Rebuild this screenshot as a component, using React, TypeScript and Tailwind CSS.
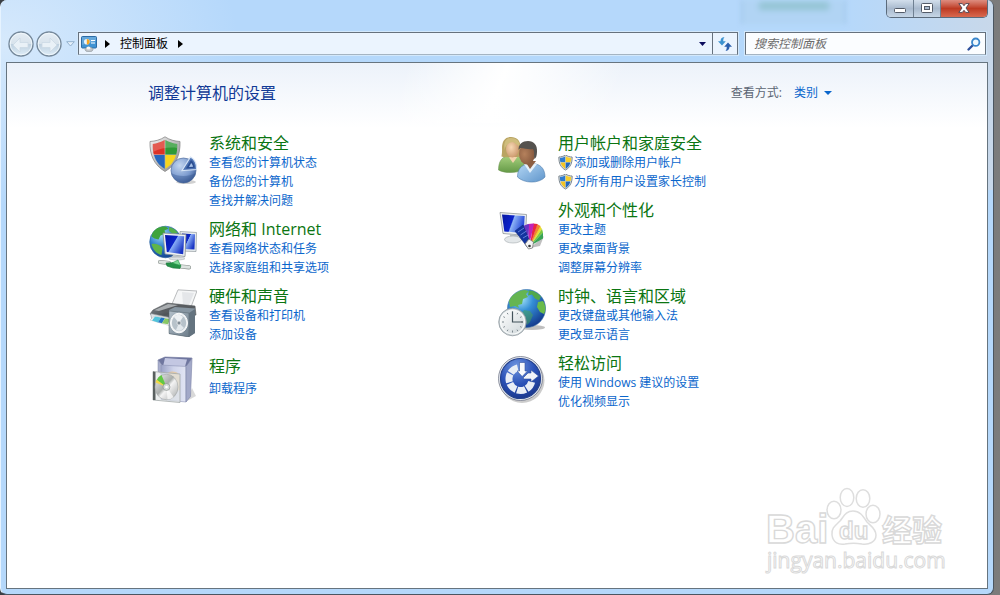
import React from 'react';

const FONT = "font-['Open_Sans','Noto_Sans_CJK_SC',sans-serif]";

interface IconProps {
  className?: string;
}

interface TaskLink {
  label: string;
  shield?: boolean;
}

interface Category {
  title: string;
  icon: React.FC<IconProps>;
  links: TaskLink[];
}

/* ---------- small icons ---------- */

const UacShieldIcon: React.FC<IconProps> = ({ className }) => (
  <svg viewBox="0 0 16 16" className={className} aria-hidden="true">
    <path d="M7.500 0C5.500 1.400 3 2 .9 2 .7 7.900 2.500 12.400 7.500 15 12.500 12.400 14.300 7.900 14.100 2 12 2 9.500 1.400 7.500 0Z" fill="#dfe4e8" stroke="#7d8890" strokeWidth="1" />
    <path d="M7.300 1.300C5.700 2.400 4.100 2.900 1.900 3.100c0 1.400.1 2.900.5 4.100h4.900Z" fill="#2d7bd0" />
    <path d="M7.700 1.300c1.600 1.100 3.200 1.600 5.400 1.800 0 1.400-.1 2.900-.5 4.100H7.700Z" fill="#f8cf2c" />
    <path d="M2.600 7.600c.7 2.700 2.300 4.900 4.700 6.300V7.600Z" fill="#f6c522" />
    <path d="M12.400 7.600c-.7 2.700-2.300 4.900-4.700 6.300V7.600Z" fill="#2468be" />
  </svg>
);

const ControlPanelIcon: React.FC<IconProps> = ({ className }) => (
  <svg viewBox="0 0 16 16" className={className} aria-hidden="true">
    <rect x=".5" y=".5" width="15" height="11.500" rx="1" fill="#3f93d3" stroke="#2b6ba5" />
    <path d="M1 1h14v4L1 9Z" fill="#fff" opacity=".2" />
    <circle cx="5.800" cy="5.800" r="2.800" fill="#e8f4fd" />
    <path d="M5.800 5.800V3a2.800 2.800 0 0 1 0 5.600Z" fill="#f5a623" />
    <path d="M10 4.500h4M10 7h4" stroke="#fff" strokeWidth="1.200" />
    <ellipse cx="8" cy="13.500" rx="4" ry="2.200" fill="#c3c8cc" stroke="#8c9499" strokeWidth=".6" />
    <ellipse cx="7.500" cy="12" rx="2" ry="1.600" fill="#f5f6f7" />
  </svg>
);

const BackForwardIcon: React.FC<{ id: string; flip?: boolean }> = ({ id, flip }) => (
  <svg viewBox="0 0 26 26" className="h-[26px] w-[26px]" aria-hidden="true">
    <defs>
      <linearGradient id={id} x1="0" y1="0" x2="0" y2="1">
        <stop offset="0" stopColor="#e6eef5" />
        <stop offset=".48" stopColor="#d8e3ec" />
        <stop offset=".52" stopColor="#bfd1e0" />
        <stop offset="1" stopColor="#e0eef9" />
      </linearGradient>
    </defs>
    <circle cx="13" cy="13" r="12" fill={`url(#${id})`} stroke="#76899b" strokeWidth="1.400" />
    <circle cx="13" cy="13" r="10.800" fill="none" stroke="#f2f8fc" strokeWidth=".9" />
    <path
      d={flip ? 'M21 14 14 7v4.500H6v5h8V21Z' : 'M5 14 12 7v4.500h8v5h-8V21Z'}
      fill="#e9f1f7"
      stroke="#ccd9e4"
      strokeWidth=".8"
      strokeLinejoin="round"
    />
  </svg>
);

const RefreshIcon: React.FC<IconProps> = ({ className }) => (
  <svg viewBox="0 0 14 14" className={className} aria-hidden="true">
    <path d="M6.500 0C3.500.2 2.500 2 2.500 4.200H0l4 4.300 3.800-4.300H5.300C5.200 2.500 5.400 1.200 6.500 0Z" fill="#3d93cf" />
    <path d="M7.500 14c3-.2 4-2 4-4.200H14L10 5.500 6.200 9.800h2.500c.1 1.700-.1 3-1.200 4.200Z" fill="#2a5fae" />
  </svg>
);

const SearchIcon: React.FC<IconProps> = ({ className }) => (
  <svg viewBox="0 0 14 14" className={className} aria-hidden="true">
    <path d="M5.800 8.200 1.500 12.500" stroke="#2c4f9c" strokeWidth="2.300" strokeLinecap="round" />
    <circle cx="8.700" cy="5.200" r="3.700" fill="#eef7fd" stroke="#3a86cc" strokeWidth="1.800" />
  </svg>
);

const RightArrow: React.FC = () => (
  <svg viewBox="0 0 5 8" className="h-2 w-[5px]" aria-hidden="true">
    <path d="M0 0 5 4 0 8Z" fill="#000" />
  </svg>
);

/* ---------- category icons ---------- */

const SecurityIcon: React.FC<IconProps> = ({ className }) => (
  <svg viewBox="0 0 48 48" className={className} aria-hidden="true">
    <defs>
      <linearGradient id="sec-rim" x1="0" y1="0" x2="1" y2="1">
        <stop offset="0" stopColor="#f4f4f4" />
        <stop offset=".5" stopColor="#bdbdbd" />
        <stop offset="1" stopColor="#8b8b8b" />
      </linearGradient>
      <radialGradient id="sec-pie" cx=".35" cy=".3" r=".8">
        <stop offset="0" stopColor="#c3d6f0" />
        <stop offset=".6" stopColor="#7c9bcf" />
        <stop offset="1" stopColor="#35558f" />
      </radialGradient>
    </defs>
    <path d="M16 .8C11.500 3.800 6.500 5.200 1 5.500 .5 19 5 29 16 35.500 27 29 31.500 19 31 5.500 25.500 5.200 20.500 3.800 16 .8Z" fill="url(#sec-rim)" stroke="#8a8a8a" strokeWidth=".8" />
    <path d="M15.700 4C12 6.200 8 7.500 3.800 7.900c-.1 4 .1 7.500 1 10.500h10.900Z" fill="#dc3226" />
    <path d="M16.300 4c3.700 2.200 7.700 3.500 11.900 3.900.1 4-.1 7.500-1 10.500H16.300Z" fill="#2f9a36" />
    <path d="M5 19c1.900 6.500 5.100 10.500 10.700 13.700V19Z" fill="#2667bd" />
    <path d="M27 19c-1.900 6.500-5.100 10.500-10.700 13.700V19Z" fill="#f7d51d" />
    <path d="M3.800 7.900C8 7.500 12 6.200 16 4c4 2.200 8 3.500 12.200 3.900l-.1 4C21 11 11 12 4 16Z" fill="#fff" opacity=".2" />
    <ellipse cx="37" cy="46" rx="10" ry="2" fill="#000" opacity=".18" />
    <circle cx="34.500" cy="34.500" r="12.500" fill="url(#sec-pie)" stroke="#54709f" strokeWidth=".7" />
    <path d="M22.300 37c6 4 18 4 24.400 0-1.700 6-6.200 10-12.200 10S24 43 22.300 37Z" fill="#34558f" opacity=".4" />
    <path d="M33 34.500 41.500 21c4.500 2.500 6.300 7 6 12.500Z" fill="#4d73b3" stroke="#d5e3f5" strokeWidth="1.200" />
    <path d="m37 32.500 5-8.500c2.300 2 3.500 4.500 3.800 7.800Z" fill="#2c4f93" />
    <path d="m40 31 2.200-4c1 1 1.600 2.200 1.900 3.700Z" fill="#a8c2e8" />
  </svg>
);

const NetworkIcon: React.FC<IconProps> = ({ className }) => (
  <svg viewBox="0 0 48 48" className={className} aria-hidden="true">
    <defs>
      <radialGradient id="net-globe" cx=".35" cy=".25" r=".8">
        <stop offset="0" stopColor="#a9e2fb" />
        <stop offset=".5" stopColor="#2f7fcb" />
        <stop offset="1" stopColor="#123f8c" />
      </radialGradient>
      <linearGradient id="net-screen" x1="0" y1="0" x2="1" y2=".6">
        <stop offset="0" stopColor="#0514a8" />
        <stop offset=".5" stopColor="#0c24c8" />
        <stop offset=".54" stopColor="#86abf5" />
        <stop offset="1" stopColor="#1a35c4" />
      </linearGradient>
    </defs>
    <circle cx="16.500" cy="20" r="15.800" fill="url(#net-globe)" stroke="#2c5f9a" strokeWidth=".6" />
    <path d="M3.500 11c3-5 8-7 13-6.500l3 2-4 2 1 3-5 2-2 4-4-1-3-2Z" fill="#3fa33c" />
    <path d="M2.500 22c4-1 9 1 11 4l-1 7c-5-1-9-6-10-11Z" fill="#5fb548" />
    <path d="M20 5c4 1 7 3 9 6l-5 1-4-3Z" fill="#56b04a" />
    <path d="m31 9.500 16.500 1-.5 19-15-.5Z" fill="#e9eef0" stroke="#8f989c" strokeWidth=".7" />
    <path d="m33 11.500 13 .8-.5 15.200-12.500-.5Z" fill="url(#net-screen)" />
    <path d="m14 11 23 1.500-1 22L16 32Z" fill="#eef1f2" stroke="#838c91" strokeWidth=".8" />
    <path d="m16 13 19.200 1.300-1 18L17.800 30Z" fill="url(#net-screen)" />
    <path d="m24 33 7 1 1 2.500-9-1Z" fill="#c5cbce" />
    <ellipse cx="28" cy="36.500" rx="8" ry="1.500" fill="#dfe3e5" stroke="#9ca3a6" strokeWidth=".5" />
    <path d="m11 40 9 1M32 44.500l8 .800" stroke="#858d89" strokeWidth="4.200" fill="none" strokeLinecap="round" />
    <path d="m11 40 9 1M32 44.500l8 .800" stroke="#dde3e0" strokeWidth="3" fill="none" strokeLinecap="round" />
    <path d="m17 41 11-.500 4 3-1 3-7-.500-6-2Z" fill="#259247" stroke="#19763a" strokeWidth=".6" />
    <path d="m23 41 6-3 2.500 5.500Z" fill="#7fda97" stroke="#259247" strokeWidth=".6" />
  </svg>
);

const HardwareIcon: React.FC<IconProps> = ({ className }) => (
  <svg viewBox="0 0 48 48" className={className} aria-hidden="true">
    <defs>
      <linearGradient id="hw-body" x1="0" y1="0" x2="1" y2="1">
        <stop offset="0" stopColor="#8a8f93" />
        <stop offset=".5" stopColor="#4f5458" />
        <stop offset="1" stopColor="#7e858a" />
      </linearGradient>
      <linearGradient id="hw-box" x1="0" y1="0" x2="1" y2="1">
        <stop offset="0" stopColor="#b3c0ca" />
        <stop offset="1" stopColor="#6d7d8a" />
      </linearGradient>
    </defs>
    <path d="M29 .8 48 2l-6 16-19-3Z" fill="#f5f6f7" stroke="#9da1a4" strokeWidth=".7" />
    <path d="m33 3 12 1-5 12-6-1Z" fill="#d9dcdf" opacity=".6" />
    <path d="m18 14 28 3 1 9-30 5-16-6 3-4Z" fill="url(#hw-body)" stroke="#55595c" strokeWidth=".6" />
    <path d="m19 14.500 25 3-22 6.500-18-2.500Z" fill="#585c60" />
    <path d="m19 15 10 1-19 6-5-.7Z" fill="#a9adb0" />
    <path d="M1.500 24.500 23 29v6L3 31Z" fill="#dfe3e6" stroke="#8f9599" strokeWidth=".6" />
    <path d="m6 27 16 3-2 6.500L1 31Z" fill="#fff" stroke="#a6abaf" strokeWidth=".4" />
    <path d="m6 27.500 6 1-3 5-6-2Z" fill="#52c3da" />
    <path d="m12 28.500 4 .8-3 5-4-1Z" fill="#2475c5" />
    <path d="m16 29.300 5 1-2 5-6-1Z" fill="#88c765" />
    <path d="m20 21 6-3 20 1.500V44l-6 4-20-3Z" fill="#8796a2" />
    <path d="m20 22 20 2v24l-20-3.500Z" fill="url(#hw-box)" stroke="#536069" strokeWidth=".5" />
    <path d="m40 24 6-4v24l-6 4Z" fill="#64737f" />
    <ellipse cx="30" cy="34" rx="8.500" ry="9.800" fill="#f0f3f5" stroke="#fafbfb" strokeWidth="1" />
    <ellipse cx="30" cy="34" rx="7.200" ry="8.300" fill="#b7c2ca" />
    <path d="m30 34-5-6c2.500-3 6.500-3 9 0Z" fill="#edf1f4" />
    <path d="m30 34-3 7c2.500 1.500 5 1 8-2Z" fill="#e2e8ec" />
    <circle cx="30" cy="34" r="2" fill="#7f8b94" stroke="#f2f4f5" strokeWidth=".7" />
  </svg>
);

const ProgramsIcon: React.FC<IconProps> = ({ className }) => (
  <svg viewBox="0 0 48 48" className={className} aria-hidden="true">
    <defs>
      <linearGradient id="prg-box" x1="0" y1="0" x2="1" y2="0">
        <stop offset="0" stopColor="#9ba2c6" />
        <stop offset=".5" stopColor="#ced3ea" />
        <stop offset="1" stopColor="#e2e5f4" />
      </linearGradient>
      <linearGradient id="prg-disc" x1="0" y1="0" x2="1" y2="1">
        <stop offset="0" stopColor="#f3f3f3" />
        <stop offset=".45" stopColor="#a9adab" />
        <stop offset=".55" stopColor="#f4f4f4" />
        <stop offset="1" stopColor="#a3a6a6" />
      </linearGradient>
    </defs>
    <path d="m38 45 9-5-4-8Z" fill="#000" opacity=".15" />
    <path d="m9 4 7-3 27 1-5 8-25-1Z" fill="#6f769f" stroke="#6d739c" strokeWidth=".6" />
    <path d="m16 2 22 1.500-2 7H14Z" fill="#c3c7e2" />
    <path d="m9 4 3.500 4.500V18L9 15.500Z" fill="#a9aecd" stroke="#7e84a7" strokeWidth=".5" />
    <path d="m12 9 25 1.500V46l-25-2.500Z" fill="url(#prg-box)" stroke="#8d93b5" strokeWidth=".6" />
    <path d="m37 10.500 6-8-1.500 38-4.500 5.500Z" fill="#a2a8c8" stroke="#7e84a7" strokeWidth=".6" />
    <path d="M19 17c6-3.500 12 0 12 5v12l-8 2Z" fill="#e5c69a" opacity=".8" />
    <path d="m4 15.500 27 2.500v28.500L4 44Z" fill="#e2e7e6" fillOpacity=".66" stroke="#a3aaa9" strokeWidth=".8" />
    <path d="M4 15.500 6.500 16v28L4 44Z" fill="#59605f" />
    <ellipse cx="17.500" cy="31" rx="11.500" ry="12.800" fill="url(#prg-disc)" stroke="#9b9f9e" strokeWidth=".5" />
    <path d="m17.500 31-10-6c1-3 3-5 5-6Z" fill="#61c943" />
    <path d="m17.500 31-11-4.500 1-3Z" fill="#f2d94b" />
    <path d="m17.500 31 7 10c-2 1.800-4 2.500-6 2.500Z" fill="#fff" opacity=".7" />
    <circle cx="17.500" cy="31" r="3.500" fill="#d5dad8" stroke="#848b88" strokeWidth=".6" />
    <circle cx="17.500" cy="31" r="1.300" fill="#fff" />
  </svg>
);

const UsersIcon: React.FC<IconProps> = ({ className }) => (
  <svg viewBox="0 0 48 48" className={className} aria-hidden="true">
    <defs>
      <linearGradient id="usr-green" x1="0" y1="0" x2="0" y2="1">
        <stop offset="0" stopColor="#a5cf7d" />
        <stop offset="1" stopColor="#659a47" />
      </linearGradient>
      <linearGradient id="usr-blue" x1="0" y1="0" x2="1" y2="1">
        <stop offset="0" stopColor="#b3d6f4" />
        <stop offset="1" stopColor="#5f95cb" />
      </linearGradient>
      <radialGradient id="usr-face" cx=".4" cy=".4" r=".7">
        <stop offset="0" stopColor="#f7d8b3" />
        <stop offset="1" stopColor="#c79267" />
      </radialGradient>
      <radialGradient id="usr-dark" cx=".35" cy=".5" r=".7">
        <stop offset="0" stopColor="#b5815c" />
        <stop offset="1" stopColor="#80543a" />
      </radialGradient>
    </defs>
    <path d="M.5 34c0-8 3-13 9-14h9c6 1 9 6 9 13-7 4-20 5-27 1Z" fill="url(#usr-green)" stroke="#628c46" strokeWidth=".5" />
    <path d="m10 20 5 7 5-7Z" fill="#f3d2ab" />
    <path d="M13 1C6.500 1 4 6 4 12c.3 5-.5 7-.5 8.500 4 1.500 9 .5 11 .5h7c2-3 1-6 1-9C23 5 19 1 13 1Z" fill="#b9a463" />
    <ellipse cx="14.500" cy="13" rx="6.500" ry="8.500" fill="url(#usr-face)" />
    <path d="M7 15c-1-5 4-9 8-9l7 5c0-6-4-9-9-9-6 0-8 6-6 13Z" fill="#cfbd7d" />
    <path d="M19.500 41c0-8 4-12 10-13h8c6 1 9.500 6 9.500 13-6 7-21 6.500-27.500 0Z" fill="url(#usr-blue)" stroke="#517eac" strokeWidth=".6" />
    <path d="m26 28 6 9 7-9Z" fill="#e6f2fb" />
    <path d="m27 25 5 8 6-8Z" fill="#8d5f43" />
    <ellipse cx="29" cy="18" rx="8" ry="10.500" fill="url(#usr-dark)" />
    <path d="M20.500 14c0-6 4-9 9.500-9 6 0 9.500 4 9 11-.2 4-1 6-2.500 7-1-3 .5-7-1.500-10-4 1-9-1-12-1-1 0-2 1-2.500 2Z" fill="#55524e" />
  </svg>
);

const AppearanceIcon: React.FC<IconProps> = ({ className }) => (
  <svg viewBox="0 0 48 48" className={className} aria-hidden="true">
    <defs>
      <linearGradient id="app-screen" x1="0" y1="0" x2="1" y2=".3">
        <stop offset="0" stopColor="#0618a0" />
        <stop offset=".5" stopColor="#0b22cc" />
        <stop offset=".55" stopColor="#8db3f5" />
        <stop offset="1" stopColor="#2a4cda" />
      </linearGradient>
    </defs>
    <path d="m2 9.500 26.500 2-1 21L5 30.500Z" fill="#eceff1" stroke="#8d9498" strokeWidth=".8" />
    <path d="m4 11.500 22.700 1.600-1 17L6.300 28.500Z" fill="url(#app-screen)" />
    <path d="m12 31 8 1v4h-8Z" fill="#b9bfc3" />
    <ellipse cx="15" cy="36.500" rx="8.500" ry="3.500" fill="#e3e7e9" stroke="#a4abaf" strokeWidth=".6" />
    <path d="m32 45 14-12-4 10Z" fill="#000" opacity=".25" />
    <path d="m32 43 10-20 2 3Z" fill="#e8dc32" />
    <path d="m32 43 12-17 1 3.500Z" fill="#7dc83b" />
    <path d="m32 43 13-13.500v6Z" fill="#38a455" />
    <path d="m32 43 7-22 3.500 2Z" fill="#f0862f" />
    <path d="m32 43 3-22.500 4.500 .500Z" fill="#ea2740" />
    <path d="m31 43-1-22 5-.500 1 .500Z" fill="#c322b6" />
    <path d="m30 43-5-20 5-2 1 1Z" fill="#6937c3" />
    <path d="m27 41-10-13 8-6 7 17-3 5Z" fill="#12349f" stroke="#0f2878" strokeWidth=".6" />
    <path d="m20 29 6-4M22.500 32l6-4M25 35l5-3" stroke="#5f80dc" strokeWidth="1" />
    <path d="m27 41 4-5 4.500 3-1 6-4 1Z" fill="#f5f5f5" stroke="#777" strokeWidth=".8" />
    <circle cx="31.500" cy="43" r="1.300" fill="#333" />
  </svg>
);

const ClockRegionIcon: React.FC<IconProps> = ({ className }) => (
  <svg viewBox="0 0 48 48" className={className} aria-hidden="true">
    <defs>
      <radialGradient id="clk-globe" cx=".35" cy=".25" r=".8">
        <stop offset="0" stopColor="#a8e6fa" />
        <stop offset=".4" stopColor="#358fd6" />
        <stop offset="1" stopColor="#12378b" />
      </radialGradient>
      <linearGradient id="clk-face" x1="0" y1="0" x2="1" y2="1">
        <stop offset="0" stopColor="#fff" />
        <stop offset="1" stopColor="#cdd5d8" />
      </linearGradient>
    </defs>
    <ellipse cx="34" cy="38.500" rx="13" ry="2.500" fill="#000" opacity=".25" />
    <circle cx="28.500" cy="19.500" r="19" fill="url(#clk-globe)" stroke="#346ba5" strokeWidth=".6" />
    <path d="M11 12c3-7 10-11 16-11l4 1-3 3 2 3-5 2-1 5-4 1 1 3-4-2-5 1Z" fill="#65b552" />
    <path d="M31 1.500c5 0 9 3 12 6l-2 4-4-2-3-4-4 1Z" fill="#51a84c" />
    <path d="m40 13 5-1c3 5 3 9 1 13l-4-2-3-5Z" fill="#6abb4a" />
    <path d="m26 21 6 1 3 4-3 7-3 3-2-7-4-4Z" fill="#4aa650" opacity=".5" />
    <circle cx="14.500" cy="33" r="13.800" fill="#c7cfd3" stroke="#879197" strokeWidth=".7" />
    <circle cx="14.500" cy="33" r="12" fill="url(#clk-face)" stroke="#f8fafa" strokeWidth="1.200" />
    <path d="M14.500 22.500v2M14.500 41.500v2M4 33h2M23 33h2M9.200 23.900l.8 1.400M19.800 23.900l-.8 1.400M5.400 27.700l1.500.8M23.600 27.700l-1.500.8M5.400 38.300l1.500-.8M23.600 38.300l-1.500-.8M9.200 42.100l.8-1.400M19.800 42.100l-.8-1.400" stroke="#7d888e" strokeWidth="1" />
    <path d="M14.500 22.500V33H25" stroke="#43525a" strokeWidth="1.200" fill="none" />
  </svg>
);

const EaseOfAccessIcon: React.FC<IconProps> = ({ className }) => (
  <svg viewBox="0 0 48 48" className={className} aria-hidden="true">
    <defs>
      <radialGradient id="eoa-disc" cx=".4" cy=".2" r=".9">
        <stop offset="0" stopColor="#6f95e0" />
        <stop offset=".5" stopColor="#2b52b7" />
        <stop offset="1" stopColor="#173285" />
      </radialGradient>
    </defs>
    <circle cx="24" cy="24.500" r="22.500" fill="#000" opacity=".2" />
    <circle cx="22.500" cy="22.500" r="22" fill="#e4e8ee" stroke="#73798a" strokeWidth=".8" />
    <circle cx="22.500" cy="22.500" r="20" fill="url(#eoa-disc)" stroke="#24418d" strokeWidth="1.200" />
    {/* segmented ring running from the horizontal arrow round to the vertical one */}
    <circle
      cx="22.500"
      cy="23"
      r="11.500"
      fill="none"
      stroke="#e9eef6"
      strokeWidth="7"
      strokeDasharray="8.700 1.200 8.700 1.200 8.700 1.200 8.700 1.200 8.700 100"
      transform="rotate(14 22.500 23)"
    />
    <path d="M21.500 6.500H27V15h2.500L24.200 20.500 19 15h2.500Z" fill="#f8fafd" stroke="#31529d" strokeWidth=".6" />
    <path d="M25.500 21.500 30 17h3v-3l7.500 6-7.500 6v-3h-7.500Z" fill="#f1f4f9" stroke="#31529d" strokeWidth=".6" />
  </svg>
);

/* ---------- data ---------- */

const leftColumn: Category[] = [
  {
    title: '系统和安全',
    icon: SecurityIcon,
    links: [{ label: '查看您的计算机状态' }, { label: '备份您的计算机' }, { label: '查找并解决问题' }],
  },
  {
    title: '网络和 Internet',
    icon: NetworkIcon,
    links: [{ label: '查看网络状态和任务' }, { label: '选择家庭组和共享选项' }],
  },
  {
    title: '硬件和声音',
    icon: HardwareIcon,
    links: [{ label: '查看设备和打印机' }, { label: '添加设备' }],
  },
  { title: '程序', icon: ProgramsIcon, links: [{ label: '卸载程序' }] },
];

const rightColumn: Category[] = [
  {
    title: '用户帐户和家庭安全',
    icon: UsersIcon,
    links: [
      { label: '添加或删除用户帐户', shield: true },
      { label: '为所有用户设置家长控制', shield: true },
    ],
  },
  {
    title: '外观和个性化',
    icon: AppearanceIcon,
    links: [{ label: '更改主题' }, { label: '更改桌面背景' }, { label: '调整屏幕分辨率' }],
  },
  {
    title: '时钟、语言和区域',
    icon: ClockRegionIcon,
    links: [{ label: '更改键盘或其他输入法' }, { label: '更改显示语言' }],
  },
  {
    title: '轻松访问',
    icon: EaseOfAccessIcon,
    links: [{ label: '使用 Windows 建议的设置' }, { label: '优化视频显示' }],
  },
];

/* ---------- window parts ---------- */

const CaptionButtons: React.FC = () => (
  <div className="flex h-[18px] overflow-hidden rounded-b-[5px] border border-t-0 border-[#5b6b7c]">
    <button
      aria-label="最小化"
      className="flex w-[27px] items-center justify-center border-r border-[#6f8092] bg-linear-to-b from-[#d3dfec] via-[#a9bace] to-[#c6d6e6] pt-1"
    >
      <svg viewBox="0 0 12 5" className="h-[5px] w-3" aria-hidden="true">
        <rect x=".5" y=".5" width="11" height="4" rx="1" fill="#fff" stroke="#535b68" />
      </svg>
    </button>
    <button
      aria-label="最大化"
      className="flex w-[27px] items-center justify-center border-r border-[#6f8092] bg-linear-to-b from-[#d3dfec] via-[#a9bace] to-[#c6d6e6] pb-0.5"
    >
      <svg viewBox="0 0 12 10" className="h-2.5 w-3" aria-hidden="true">
        <rect x=".5" y=".5" width="11" height="9" rx="1" fill="#fff" stroke="#535b68" />
        <rect x="3.500" y="3.500" width="5" height="3" fill="#a9bace" stroke="#535b68" />
      </svg>
    </button>
    <button
      aria-label="关闭"
      className="flex w-[46px] items-center justify-center bg-linear-to-b from-[#dd8d80] via-[#bd3a22] to-[#d9694f] pb-0.5"
    >
      <svg viewBox="0 0 12 10" className="h-2.5 w-3" aria-hidden="true">
        <path
          d="M.8.600h3.600L6 2.700 7.600.600h3.600L8 5l3.200 4.400H7.600L6 7.300 4.400 9.400H.8L4 5Z"
          fill="#fff"
          stroke="#5a4a55"
          strokeWidth="1"
        />
      </svg>
    </button>
  </div>
);

const AddressBar: React.FC = () => (
  <div className="flex h-[23px] flex-1 border border-[#66717d] border-b-[#a5b4c2] bg-[#ebf4fe] shadow-[0_0_0_1px_#d3e8fb]">
    <nav aria-label="地址" className="flex flex-1 items-center pl-0.5">
      <ControlPanelIcon className="h-4 w-4" />
      <span className="ml-2">
        <RightArrow />
      </span>
      <a href="#" className="ml-2.5 text-xs text-black">
        控制面板
      </a>
      <span className="ml-2.5">
        <RightArrow />
      </span>
    </nav>
    <button aria-label="以前的位置" className="flex w-5 items-center justify-center">
      <svg viewBox="0 0 7 4" className="h-1 w-[7px]" aria-hidden="true">
        <path d="M0 0h7L3.500 4Z" fill="#0b0b5c" />
      </svg>
    </button>
    <button aria-label="刷新" className="flex w-[25px] items-center justify-center border-l border-[#66717d]">
      <RefreshIcon className="h-3.5 w-3.5" />
    </button>
  </div>
);

const SearchBox: React.FC = () => (
  <div className="flex h-[23px] w-[241px] items-center border border-[#66717d] border-b-[#a5b4c2] bg-[#fbfdff] pr-1 pl-2 shadow-[0_0_0_1px_#d3e8fb]">
    <input
      type="text"
      aria-label="搜索控制面板"
      placeholder="搜索控制面板"
      className="min-w-0 flex-1 bg-transparent text-xs text-black italic outline-none placeholder:text-[#6b6b6b]"
    />
    <button aria-label="搜索">
      <SearchIcon className="h-3.5 w-3.5" />
    </button>
  </div>
);

const CategoryBlock: React.FC<{ category: Category }> = ({ category }) => {
  const Icon = category.icon;
  const single = category.links.length === 1;

  return (
    <section className="flex gap-3">
      <Icon className="mt-0.5 h-12 w-12 shrink-0" />
      <div className={single ? 'flex h-[47px] flex-col justify-between py-[3px]' : 'min-w-0'}>
        <h2 className="text-base leading-[19px]">
          <a href="#" className="text-[#0b7512] hover:underline">
            {category.title}
          </a>
        </h2>
        <ul className="text-xs leading-[19px]">
          {category.links.map((link) => (
            <li key={link.label}>
              <a href="#" className="flex items-center text-[#0a66cc] hover:underline">
                {link.shield && <UacShieldIcon className="h-4 w-4" />}
                {link.label}
              </a>
            </li>
          ))}
        </ul>
      </div>
    </section>
  );
};

const Watermark: React.FC = () => (
  <svg viewBox="0 0 184 92" className="pointer-events-none absolute right-10 bottom-2.5 h-[92px] w-[184px]" aria-hidden="true">
    <g fill="#fff" stroke="#dedede" strokeWidth="1.500">
      <path d="M90 25c-7 0-9 5-13 10-4 4-9 7-8 14 1 8 7 10 13 9 5-1 12-1 17 0 7 1 14-2 14-9 0-6-5-9-9-13-4-6-7-11-14-11Z" />
      <ellipse cx="71" cy="24" rx="7" ry="8.800" />
      <ellipse cx="84" cy="11.500" rx="6.800" ry="9" />
      <ellipse cx="100" cy="12.500" rx="6.800" ry="8.800" />
      <ellipse cx="110" cy="28" rx="7" ry="8.800" />
    </g>
    <g fill="#fff" stroke="#d9d9d9" strokeWidth="1.400">
      <text x="3" y="57" fontSize="40" fontWeight="700" className="font-['Liberation_Sans',sans-serif]">
        Bai
      </text>
      <text x="76" y="53" fontSize="24" fontWeight="700" className="font-['Liberation_Sans',sans-serif]">
        du
      </text>
      <text x="119" y="55" fontSize="30" fontWeight="700" className="font-['Noto_Sans_CJK_SC',sans-serif]">
        经验
      </text>
      <text x="4" y="82" fontSize="21" fontWeight="400" strokeWidth="1" className="font-['Open_Sans',sans-serif]">
        jingyan.baidu.com
      </text>
    </g>
  </svg>
);

const App: React.FC = () => {
  return (
    <div className={`flex min-h-screen bg-linear-to-r from-[#3a3f45] to-[#7c7c7c] pr-1.5 ${FONT}`}>
      <div className="relative flex flex-1 flex-col overflow-hidden rounded-[7px] border-x border-b border-[#4b5661] border-l-[#e6f3ff] bg-[#b5d8fb] px-[5px] pb-[5px]">
        <div className="absolute top-0 left-0 h-52 w-[240px] bg-radial-[at_0%_20%] from-[#d6e9fc] to-transparent to-70%" />
        {/* page behind the glass frame */}
        <div className="absolute top-0 right-[147px] h-6 w-[105px] border-x-2 border-[#a3c8ea] bg-[#b1d4f4] blur-[2px]">
          <div className="mx-auto mt-0.5 h-2 w-[70px] bg-[#7fb9bd] opacity-60 blur-[2px]" />
        </div>
        <div className="absolute top-0 right-0 h-[190px] w-[150px] bg-linear-to-r from-transparent to-[#c8d8ea]" />

        <header className="relative">
          <div className="flex justify-end">
            <CaptionButtons />
          </div>
          <div className="mt-3.5 flex items-center pr-0.5 pl-0.5">
            <div className="mr-1 flex gap-0.5">
              <button aria-label="后退" className="-my-1">
                <BackForwardIcon id="nav-back" />
              </button>
              <button aria-label="前进" className="-my-1">
                <BackForwardIcon id="nav-forward" flip />
              </button>
            </div>
            <button aria-label="最近浏览的页面" className="mr-[3px]">
              <svg viewBox="0 0 9 6" className="h-1.5 w-[9px]" aria-hidden="true">
                <path d="M.7.7h7.600L4.500 5Z" fill="#e6f1fc" stroke="#8cacc9" strokeWidth=".9" />
              </svg>
            </button>
            <div className="flex flex-1 gap-[7px]">
              <AddressBar />
              <SearchBox />
            </div>
          </div>
        </header>

        <main className="relative mt-[7px] flex-1 border border-[#66747f] bg-white bg-linear-to-b from-[#ecf2fa] to-white to-[65px] bg-no-repeat px-4 pb-4">
          <div className="absolute inset-x-0 top-0 h-[60px] bg-linear-110 from-transparent from-40% via-white via-50% to-transparent to-62%" />
          <div className="relative mx-auto max-w-[698px]">
            <div className="flex items-center justify-between pt-[18px] pr-3.5">
              <h1 className="text-base text-[#113a96]">调整计算机的设置</h1>
              <div className="flex items-center text-xs">
                <label htmlFor="view-by" className="text-[#5b6573]">
                  查看方式:
                </label>
                <div className="relative ml-3 flex items-center">
                  <select id="view-by" className="w-[38px] appearance-none bg-transparent text-[#0a66cc] outline-none">
                    <option>类别</option>
                    <option>大图标</option>
                    <option>小图标</option>
                  </select>
                  <svg viewBox="0 0 8 4" className="pointer-events-none absolute right-0 h-1 w-2" aria-hidden="true">
                    <path d="M0 0h8L4 4Z" fill="#0a66cc" />
                  </svg>
                </div>
              </div>
            </div>

            <div className="mt-[29px] grid grid-cols-2">
              {[leftColumn, rightColumn].map((column, i) => (
                <div key={i} className="flex flex-col gap-2.5 pl-px">
                  {column.map((category) => (
                    <CategoryBlock key={category.title} category={category} />
                  ))}
                </div>
              ))}
            </div>
          </div>
          <Watermark />
        </main>
      </div>
    </div>
  );
};

export default App;
